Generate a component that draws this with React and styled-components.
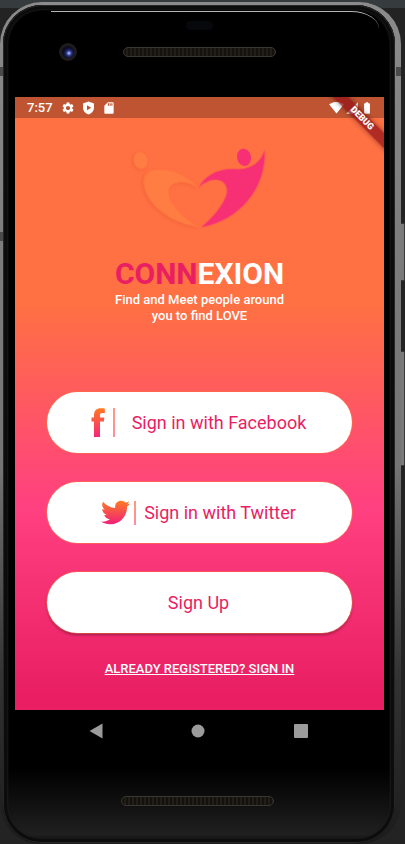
import React from "react";
import styled, { createGlobalStyle } from "styled-components";
import {
  MdSettings,
  MdSdCard,
  MdBatteryFull,
  MdSignalWifi4Bar,
  MdSignalCellular4Bar,
} from "react-icons/md";
import { FaTwitter } from "react-icons/fa";

const GlobalStyle = createGlobalStyle`
  *, *::before, *::after { box-sizing: border-box; }
  body {
    margin: 0;
    background: #232323;
    font-family: Roboto, "Noto Sans", sans-serif;
  }
`;

const Desk = styled.div`
  min-height: 100vh;
  display: flex;
  padding: 2px 4px 0 0;
  background: linear-gradient(#363b3e 8px, #232323 8px);
  overflow: hidden;
`;

const Phone = styled.div`
  position: relative;
  flex: 1;
  display: flex;
  padding: 3px 6px 1px 3px;
  border-radius: 42px 42px 40px 40px;
  background: linear-gradient(#8b8b8b, #7c7c7c 30%, #747474 55%, #333 80%, #1c1c1c);
`;

const SideKey = styled.span`
  position: absolute;
  left: 100%;
  top: ${(p) => p.$top}px;
  width: 4px;
  height: ${(p) => p.$height}px;
  background: #7a7a7a;
  border: 1px solid #3a3a3a;
  border-left: 0;
  border-radius: 0 2px 2px 0;
`;

const Antenna = styled.span`
  position: absolute;
  ${(p) => p.$side}: 0;
  top: ${(p) => p.$top}px;
  width: 5px;
  height: 9px;
  background: #4a4a4a;
`;

const Bezel = styled.div`
  position: relative;
  flex: 1;
  display: flex;
  flex-direction: column;
  padding: 0 11px 0 12px;
  border-radius: 39px 39px 38px 38px;
  background: linear-gradient(#000 91%, #0b0b0b 94%, #202020 99%, #0a0a0a);
  box-shadow: inset 0 0 0 1px #262626, inset 0 0 0 4px #0c0c0c, inset 0 0 2px 5px #1b1b1b;
`;

const Shine = styled.span`
  position: absolute;
  top: 6px;
  left: 48px;
  right: 16px;
  height: 20px;
  border-top: 1px solid #b4b4b4;
  border-top-right-radius: 28px 18px;
`;

const TopHardware = styled.div`
  height: 92px;
  display: grid;
  grid-template-columns: 1fr 153px 1fr;
  grid-template-rows: 9px 18px;
  row-gap: 13px;
  align-items: center;
  padding-top: 16px;
`;

const Sensor = styled.span`
  grid-column: 1 / -1;
  justify-self: center;
  width: 27px;
  height: 9px;
  border-radius: 5px;
  background: #07080c;
`;

const Camera = styled.span`
  width: 18px;
  height: 18px;
  margin-left: 44px;
  border-radius: 50%;
  border: 3px solid #1f1b1c;
  background: radial-gradient(circle at 58% 60%, #93a3ee 0 1px, #3b479d 2px, #141a4c 4px, #0a0c20 6px);
`;

const Speaker = styled.span`
  width: 153px;
  height: 10px;
  border: 1px solid #3a3733;
  border-radius: 5px;
  background: repeating-linear-gradient(90deg, #15120e 0 2px, #211e1a 2px 4px);
`;

const Screen = styled.main`
  position: relative;
  overflow: hidden;
  display: flex;
  flex-direction: column;
  background: linear-gradient(#ff7043 0%, #ff7043 34%, #ff4081 67%, #e91e63 98%);
`;

const StatusBar = styled.header`
  height: 21px;
  display: flex;
  align-items: center;
  justify-content: space-between;
  padding: 0 10px 0 12px;
  background: rgba(0, 0, 0, 0.25);
  color: #fff;
  font-size: 13px;
  font-weight: 500;
  line-height: 20px;
`;

const StatusGroup = styled.div`
  display: flex;
  align-items: center;
  gap: ${(p) => p.$gap}px;
`;

const Clock = styled.time`
  margin-right: 1px;
`;

const BannerCorner = styled.div`
  position: absolute;
  top: 0;
  right: 0;
  width: 60px;
  height: 60px;
  overflow: hidden;
  pointer-events: none;
`;

const DebugBanner = styled.span`
  position: absolute;
  top: 16px;
  right: -28px;
  width: 100px;
  height: 11px;
  transform: rotate(45deg);
  background: rgba(150, 20, 24, 0.75);
  box-shadow: 0 0 5px rgba(0, 0, 0, 0.45);
  color: #fff;
  font-size: 9px;
  font-weight: 900;
  line-height: 11px;
  text-align: center;
`;

const Content = styled.div`
  display: flex;
  flex-direction: column;
  align-items: center;
  padding: 22px 32px 32px;
`;

const Brand = styled.h1`
  margin: 16px 0 0;
  color: #fff;
  font-size: 30px;
  font-weight: 700;
  line-height: 36px;
`;

const BrandAccent = styled.span`
  color: #e91e63;
`;

const Tagline = styled.p`
  width: 184px;
  margin: 0 0 68px;
  color: #fff;
  font-size: 13px;
  font-weight: 500;
  line-height: 16px;
  text-align: center;
`;

const Actions = styled.div`
  align-self: stretch;
  display: flex;
  flex-direction: column;
  gap: 29px;
  margin-bottom: 27px;
`;

const PillButton = styled.button`
  height: 61px;
  display: flex;
  align-items: center;
  justify-content: center;
  padding: 0 2px 0 0;
  border: 0;
  border-radius: 31px;
  background: #fff;
  box-shadow: ${(p) =>
    p.$raised
      ? "0 0 0 1px rgba(255,112,67,.5), 0 2px 3px rgba(0,0,0,.35)"
      : "0 0 0 1px rgba(255,112,67,.6)"};
  color: #e91e63;
  font-family: inherit;
  font-size: 18px;
  font-weight: 400;
  cursor: pointer;
`;

const Divider = styled.span`
  width: 2px;
  height: ${(p) => p.$height}px;
  margin: 0 ${(p) => p.$after}px 0 ${(p) => p.$before}px;
  background: linear-gradient(#ff9a80, #ff8d9e);
`;

const SignInLink = styled.a`
  color: #fff;
  font-size: 13px;
  font-weight: 500;
  line-height: 18px;
  text-decoration: underline;
`;

const NavBar = styled.nav`
  height: 42px;
  display: grid;
  grid-template-columns: repeat(3, 1fr);
  padding: 0 32px 0 30px;
`;

const NavButton = styled.button`
  display: flex;
  align-items: center;
  justify-content: center;
  padding: 0;
  border: 0;
  background: none;
  cursor: pointer;
`;

const BottomHardware = styled.div`
  flex: 1;
  display: flex;
  justify-content: center;
  padding: 44px 4px 37px 0;
`;

function ShieldIcon() {
  return (
    <svg width="13" height="14" viewBox="0 0 26 28" aria-hidden="true">
      <path
        fill="#fff"
        fillRule="evenodd"
        d="M13 1 L24 5 V13 C24 20 19 25 13 27 C7 25 2 20 2 13 V5 Z M10 8.500 V18.500 L18.500 13.500 Z"
      />
    </svg>
  );
}

function HeartPeople() {
  return (
    <svg width="160" height="100" viewBox="0 0 480 300" role="img" aria-label="Connexion logo">
      <defs>
        <filter id="soft" x="-10%" y="-10%" width="120%" height="120%">
          <feDropShadow dx="-3" dy="3" stdDeviation="4" floodColor="#b43c14" floodOpacity="0.2" />
        </filter>
      </defs>
      <g fill="#ff7b42" filter="url(#soft)">
        <ellipse cx="62" cy="61" rx="21" ry="26" transform="rotate(-12 62 61)" />
        <path d="M235 145 C212 112 165 88 115 88 C84 88 70 104 71 128 C74 190 150 252 239 261 C196 240 146 192 146 157 C146 122 198 116 235 145 Z" />
      </g>
      <g fill="#f73075">
        <ellipse cx="372" cy="52" rx="21" ry="26" transform="rotate(-12 372 52)" />
        <path d="M235 145 C254 107 290 87 340 87 C390 93 424 66 434 29 C440 145 358 242 243 262 C282 230 320 183 321 151 C318 111 268 108 235 145 Z" />
      </g>
    </svg>
  );
}

function FacebookIcon() {
  return (
    <svg width="14" height="29" viewBox="0 0 14 29" aria-hidden="true">
      <defs>
        <linearGradient id="fbFill" x1="0" y1="0" x2="0" y2="1">
          <stop offset="0" stopColor="#ff7a22" />
          <stop offset="1" stopColor="#f5267c" />
        </linearGradient>
      </defs>
      <path
        fill="url(#fbFill)"
        d="M3 29 V13.500 H0.500 V9.500 H3 V7.500 C3 2.500 5.500 0.300 9.800 0.300 C11.300 0.300 12.700 0.400 13.800 0.600 V5 H11.500 C9.700 5 9 5.700 9 7.300 V9.500 H13.300 L12.900 13.500 H9 V29 Z"
      />
    </svg>
  );
}

function TwitterIcon() {
  return (
    <>
      <svg width="0" height="0" aria-hidden="true">
        <defs>
          <linearGradient id="twFill" x1="0" y1="0" x2="0" y2="1">
            <stop offset="0" stopColor="#ff7a22" />
            <stop offset="1" stopColor="#f0207c" />
          </linearGradient>
        </defs>
      </svg>
      <FaTwitter size={29} fill="url(#twFill)" aria-hidden="true" />
    </>
  );
}

export default function App() {
  return (
    <>
      <GlobalStyle />
      <Desk>
        <Phone>
          <Antenna $side="left" $top={65} />
          <Antenna $side="right" $top={65} />
          <Antenna $side="left" $top={230} />
          <SideKey $top={221} $height={58} />
          <SideKey $top={349} $height={115} />
          <Bezel>
            <Shine />
            <TopHardware>
              <Sensor />
              <Camera />
              <Speaker />
            </TopHardware>

            <Screen>
              <StatusBar>
                <StatusGroup $gap={7}>
                  <Clock>7:57</Clock>
                  <MdSettings size={14} />
                  <ShieldIcon />
                  <MdSdCard size={14} />
                </StatusGroup>
                <StatusGroup $gap={1}>
                  <MdSignalWifi4Bar size={15} />
                  <MdSignalCellular4Bar size={14} />
                  <MdBatteryFull size={14} />
                </StatusGroup>
              </StatusBar>
              <BannerCorner>
                <DebugBanner>DEBUG</DebugBanner>
              </BannerCorner>

              <Content>
                <HeartPeople />
                <Brand>
                  <BrandAccent>CONN</BrandAccent>EXION
                </Brand>
                <Tagline>Find and Meet people around you to find LOVE</Tagline>
                <Actions>
                  <PillButton type="button">
                    <FacebookIcon />
                    <Divider $height={29} $before={8} $after={17} />
                    Sign in with Facebook
                  </PillButton>
                  <PillButton type="button">
                    <TwitterIcon />
                    <Divider $height={24} $before={4} $after={8} />
                    Sign in with Twitter
                  </PillButton>
                  <PillButton type="button" $raised>
                    Sign Up
                  </PillButton>
                </Actions>
                <SignInLink href="#sign-in">ALREADY REGISTERED? SIGN IN</SignInLink>
              </Content>
            </Screen>

            <NavBar>
              <NavButton type="button" aria-label="Back">
                <svg width="14" height="16" viewBox="0 0 14 16">
                  <path d="M13.500 0.500 V15.500 L0.500 8 Z" fill="#9b9b9b" />
                </svg>
              </NavButton>
              <NavButton type="button" aria-label="Home">
                <svg width="14" height="14" viewBox="0 0 14 14">
                  <circle cx="7" cy="7" r="6.500" fill="#9b9b9b" />
                </svg>
              </NavButton>
              <NavButton type="button" aria-label="Overview">
                <svg width="14" height="14" viewBox="0 0 14 14">
                  <rect width="14" height="14" rx="1" fill="#9b9b9b" />
                </svg>
              </NavButton>
            </NavBar>

            <BottomHardware>
              <Speaker />
            </BottomHardware>
          </Bezel>
        </Phone>
      </Desk>
    </>
  );
}
